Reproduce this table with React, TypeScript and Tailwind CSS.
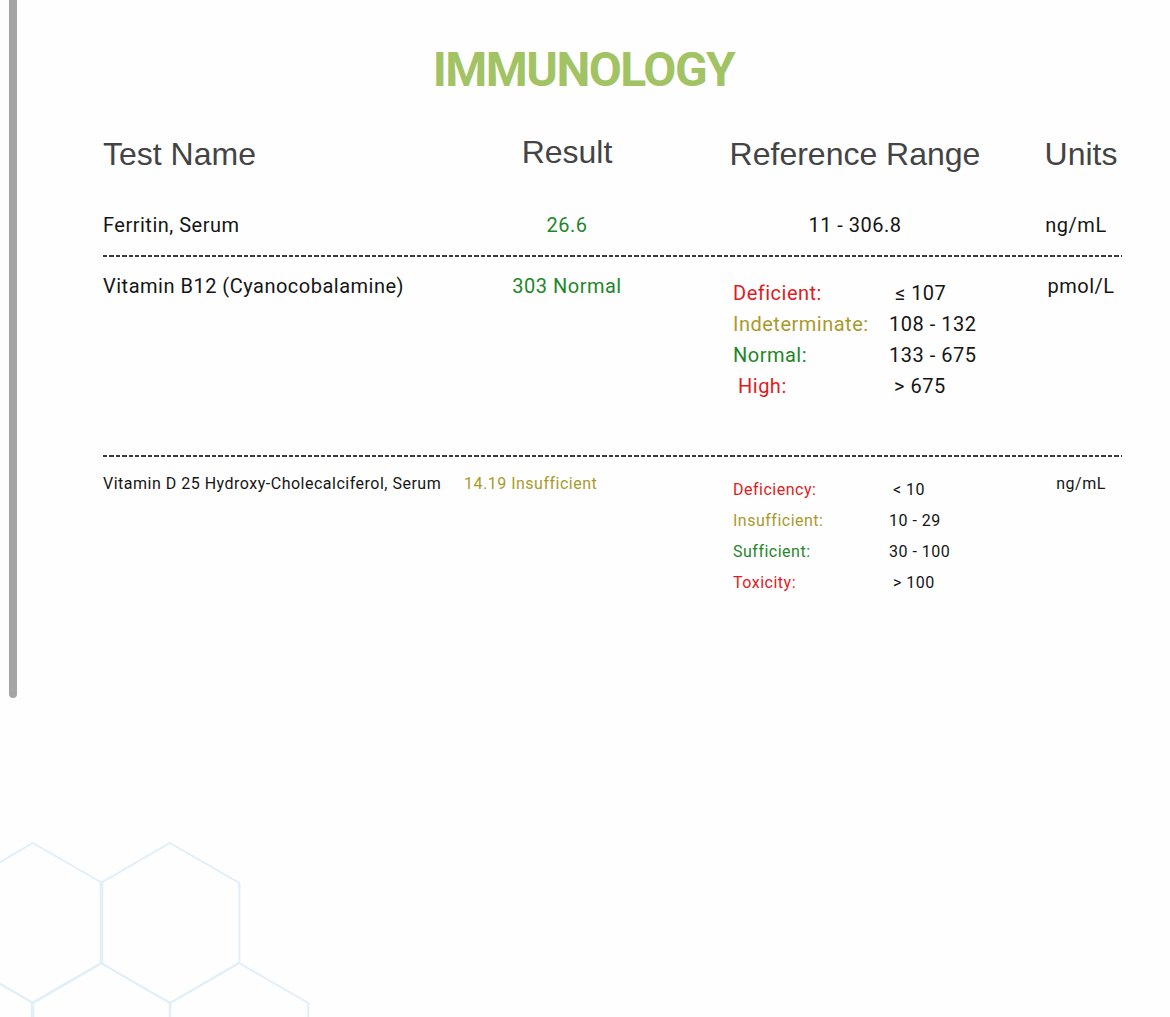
const body = { fontFamily: "Roboto, 'Noto Sans', sans-serif" };
const head = { fontFamily: "'Liberation Sans', Arial, sans-serif" };

const red = "text-[#e01b22]";
const olive = "text-[#a99a2b]";
const green = "text-[#1f862a]";

const b12Ranges = [
  { label: "Deficient:", value: "\u2264 107", color: red, lpad: "", vpad: "pl-[6px]" },
  { label: "Indeterminate:", value: "108 - 132", color: olive, lpad: "", vpad: "" },
  { label: "Normal:", value: "133 - 675", color: green, lpad: "", vpad: "" },
  { label: "High:", value: "> 675", color: red, lpad: "pl-[5px]", vpad: "pl-[5px]" },
];

const vitDRanges = [
  { label: "Deficiency:", value: "< 10", color: red, vpad: "pl-[4px]" },
  { label: "Insufficient:", value: "10 - 29", color: olive, vpad: "" },
  { label: "Sufficient:", value: "30 - 100", color: green, vpad: "" },
  { label: "Toxicity:", value: "> 100", color: red, vpad: "pl-[4px]" },
];

function Dashes() {
  return (
    <div className="h-[2px] w-full bg-[repeating-linear-gradient(to_right,#3a3a3a_0_4.5px,transparent_4.5px_6.4px)]" />
  );
}

function Hexagons() {
  const s = 80;
  const w = 69.3;
  const hex = (cx: number, cy: number) =>
    [
      [cx, cy - s],
      [cx + w, cy - s / 2],
      [cx + w, cy + s / 2],
      [cx, cy + s],
      [cx - w, cy + s / 2],
      [cx - w, cy - s / 2],
    ]
      .map((p) => p.join(","))
      .join(" ");
  const centers = [
    [33, 103],
    [170, 103],
    [-36, 223],
    [101, 223],
    [239, 223],
  ];
  return (
    <svg
      className="absolute left-0 bottom-0"
      width="340"
      height="197"
      viewBox="0 0 340 197"
    >
      {centers.map(([x, y], i) => (
        <polygon
          key={i}
          points={hex(x, y)}
          fill="none"
          stroke="#e1eff8"
          strokeWidth="2"
        />
      ))}
    </svg>
  );
}

export default function App() {
  return (
    <div className="relative h-[1017px] w-[1170px] overflow-hidden bg-[#fefefe]">
      {/* scroll rail */}
      <div className="absolute left-[9px] top-0 h-[698px] w-[8px] rounded-b-full bg-[#a5a5a5]" />
      <Hexagons />

      <div className="pl-[103px] w-[1122px]">
        <h1
          className="pt-[44px] h-[96px] text-center text-[48px] leading-[52px] font-bold tracking-[-1.5px] text-[#a2c363] pr-[58px]"
          style={body}
        >
          IMMUNOLOGY
        </h1>

        {/* Header row */}
        <div
          className="mt-[34px] grid grid-cols-[361px_206px_370px_82px] h-[40px] items-center text-[32px] text-[#444]"
          style={head}
        >
          <div>Test Name</div>
          <div className="text-center -mt-[4px]">Result</div>
          <div className="text-center">Reference Range</div>
          <div className="text-center">Units</div>
        </div>

        {/* Ferritin */}
        <div
          className="mt-[40px] grid grid-cols-[361px_206px_370px_82px] h-[28px] items-center text-[20px] tracking-[0.5px] text-[#151515]"
          style={body}
        >
          <div>Ferritin, Serum</div>
          <div className={`text-center ${green}`}>26.6</div>
          <div className="text-center">11 - 306.8</div>
          <div className="text-center -ml-[10px]">ng/mL</div>
        </div>

        <div className="mt-[17px]">
          <Dashes />
        </div>

        {/* Vitamin B12 */}
        <div
          className="mt-[15px] grid grid-cols-[361px_206px_370px_82px] items-start h-[183px] text-[20px] tracking-[0.5px] text-[#151515]"
          style={body}
        >
          <div className="leading-[28px]">Vitamin B12 (Cyanocobalamine)</div>
          <div className={`leading-[28px] text-center ${green}`}>303 Normal</div>
          <div className="pl-[63px] pt-[6px] grid grid-cols-[156px_1fr] content-start leading-[31px]">
            {b12Ranges.map((r) => (
              <div key={r.label} className="contents">
                <div className={`${r.color} ${r.lpad}`}>{r.label}</div>
                <div className={r.vpad}>{r.value}</div>
              </div>
            ))}
          </div>
          <div className="leading-[28px] text-center">pmol/L</div>
        </div>

        <Dashes />

        {/* Vitamin D */}
        <div
          className="mt-[16px] grid grid-cols-[361px_206px_370px_82px] items-start text-[16px] tracking-[0.5px] text-[#151515]"
          style={body}
        >
          <div className="leading-[22px] whitespace-nowrap">Vitamin D 25 Hydroxy-Cholecalciferol, Serum</div>
          <div className={`leading-[22px] ${olive}`}>14.19 Insufficient</div>
          <div className="pl-[63px] pt-[1px] grid grid-cols-[156px_1fr] content-start leading-[31px]">
            {vitDRanges.map((r) => (
              <div key={r.label} className="contents">
                <div className={r.color}>{r.label}</div>
                <div className={r.vpad}>{r.value}</div>
              </div>
            ))}
          </div>
          <div className="leading-[22px] text-center">ng/mL</div>
        </div>
      </div>
    </div>
  );
}
